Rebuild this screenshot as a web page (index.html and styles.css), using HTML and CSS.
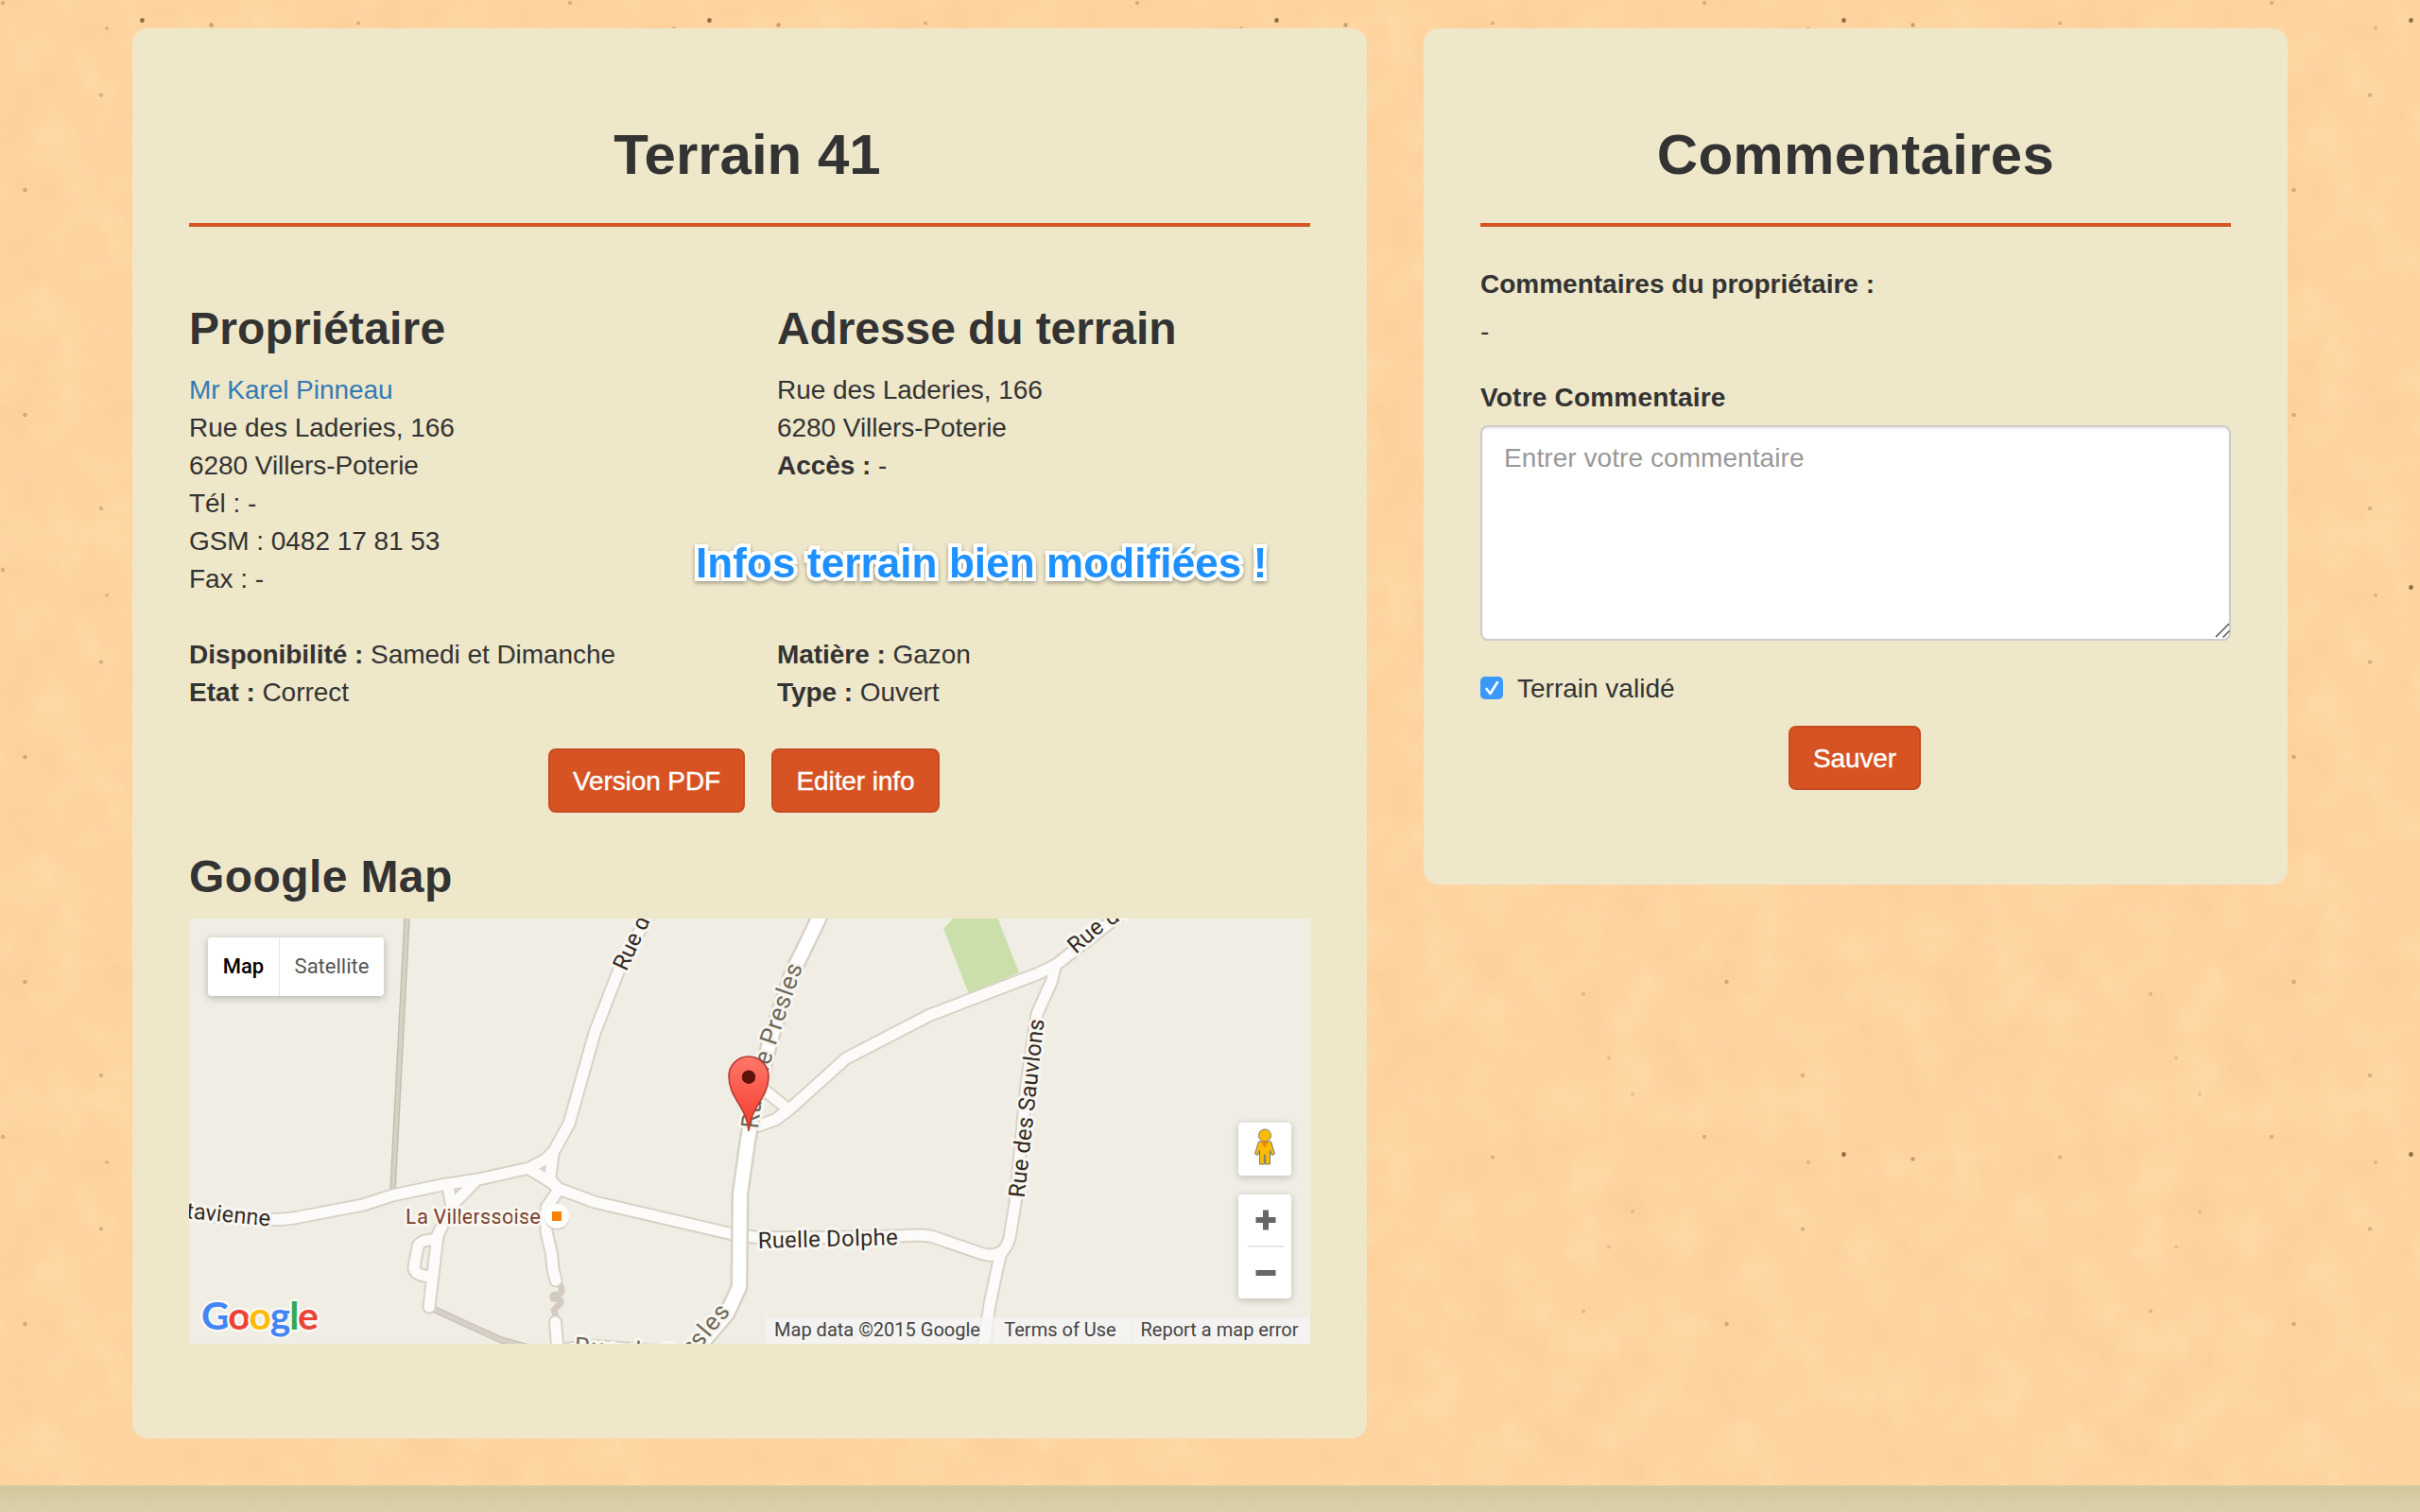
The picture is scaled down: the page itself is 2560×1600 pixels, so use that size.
FILE: index.html
```html
<!DOCTYPE html>
<html lang="fr">
<head>
<meta charset="utf-8">
<title>Terrain 41</title>
<link rel="stylesheet" href="styles.css">
</head>
<body>
<main class="page">
  <section class="card card-terrain">
    <h1 class="title t-terrain">Terrain 41</h1>
    <hr class="rule">
    <div class="columns">
      <div class="col">
        <h2 class="subtitle t-prop">Propriétaire</h2>
        <p><a class="link" href="#">Mr Karel Pinneau</a></p>
        <p>Rue des Laderies, 166</p>
        <p>6280 Villers-Poterie</p>
        <p>Tél : -</p>
        <p>GSM : 0482 17 81 53</p>
        <p>Fax : -</p>
      </div>
      <div class="col">
        <h2 class="subtitle t-adr">Adresse du terrain</h2>
        <p>Rue des Laderies, 166</p>
        <p>6280 Villers-Poterie</p>
        <p><b>Accès :</b> -</p>
      </div>
    </div>
    <div class="columns details">
      <div class="col">
        <p><b>Disponibilité :</b> Samedi et Dimanche</p>
        <p><b>Etat :</b> Correct</p>
      </div>
      <div class="col">
        <p><b>Matière :</b> Gazon</p>
        <p><b>Type :</b> Ouvert</p>
      </div>
    </div>
    <div class="actions">
      <button class="btn btn-pdf">Version PDF</button>
      <button class="btn btn-edit">Editer info</button>
    </div>
    <h2 class="subtitle t-map">Google Map</h2>
    <div class="map">
      <svg class="map-canvas" viewBox="200 972 1186 450" width="1186" height="450">
        <defs>
          <linearGradient id="pin" x1="0" y1="0" x2="0" y2="1">
            <stop offset="0" stop-color="#ff776b"/>
            <stop offset="1" stop-color="#f23a2b"/>
          </linearGradient>
          <g id="minor">
            <path d="M195 1283Q240 1290 285 1290.500Q302 1291 316 1288L384 1275L415 1265L467 1254L506 1248L560 1236L577 1227L586 1218L602 1189L629 1093L656 1023L686 968"/>
            <path d="M560 1237L583 1251L591 1258L629 1272L775 1306L801 1309.500Q920 1310 972 1307L984.500 1308L1040 1327Q1051 1330 1058 1325"/>
            <path d="M585 1222L581.500 1247L591 1259L578 1278V1303L583.500 1327L585 1343L588 1355"/>
            <path d="M587.500 1399L590 1430"/>
            <path d="M474 1256L478.500 1280M504 1249L478.500 1275L463 1307L459 1340L454 1383"/>
            <path d="M462 1312Q445 1311 442 1319L438 1341Q438 1350 457 1351"/>
            <path d="M797 1193L820 1185L835 1174L895 1120L984 1074L1099 1030L1117 1021L1176 975L1196 960"/>
            <path d="M803 1149L834 1174"/>
            <path d="M1116 1022L1113 1037L1097 1073L1086 1147L1074 1273L1068 1310Q1066 1318 1058 1328L1047 1380L1040 1428"/>
            <path d="M596 1428L625 1424L700 1430"/>
          </g>
          <path id="major" d="M869 966L838 1030L815 1100L798 1167L791 1207L783 1263L782 1362L769 1390L735 1430"/>
          <path id="l-presles" d="M802 1195Q806 1150 821 1105T848 1026L858 1002"/>
          <path id="l-south" d="M607 1433L700 1440Q724 1443 740 1428L790 1368"/>
          <path id="l-ne" d="M1138 1010L1161 990Q1174 978 1230 951"/>
        </defs>
        <rect x="200" y="972" width="1186" height="450" fill="#f0ede4"/>
        <path d="M1008 972H1055.500L1078 1029L1025 1052L998 982.700Z" fill="#cbdfab"/>
        <path d="M430.500 972L415.500 1260" stroke="#bfbbad" stroke-width="6.500"/>
        <path d="M430.500 972L415.500 1260" stroke="#d5d2c4" stroke-width="4"/>
        <path d="M456 1384L530 1418L560 1426" stroke="#c4bcb2" stroke-width="7" fill="none"/>
        <path d="M456 1384L530 1418L560 1426" stroke="#d8d0c8" stroke-width="5" fill="none"/>
        <path id="steps" d="M592 1358Q597 1368 591 1370Q583 1369 585 1374Q596 1375 593 1379L586 1386L589 1396" stroke="#d3cac1" stroke-width="6.500" fill="none" stroke-linecap="round"/>
        <use href="#minor" class="road" stroke="#d8d2c6" stroke-width="15"/>
        <use href="#minor" class="road" stroke="#fcfbf9" stroke-width="11"/>
        <use href="#major" class="road" stroke="#d8d2c6" stroke-width="19"/>
        <use href="#major" class="road" stroke="#fff" stroke-width="14"/>
        <g class="lbl">
          <text font-size="24" text-anchor="end" transform="translate(285.500 1297.500) rotate(5.500)" textLength="89.500">tavienne</text>
          <text font-size="24" transform="translate(662.500 1028.500) rotate(-65)">Rue de</text>
          <text font-size="24" x="0" y="0" transform="translate(802 1321) rotate(-1.500)" textLength="148">Ruelle Dolphe</text>
          <text font-size="24" transform="translate(1083.500 1268) rotate(-83.600)" textLength="190">Rue des Sauvlons</text>
          <text font-size="24"><textPath href="#l-ne">Rue de</textPath></text>
          <text font-size="26" class="grey"><textPath href="#l-presles" textLength="179">Rue de Presles</textPath></text>
          <text font-size="26" class="grey"><textPath href="#l-south" textLength="188">Rue de Presles</textPath></text>
          <text font-size="22" class="poi" x="429" y="1294.500" textLength="143">La Villerssoise</text>
        </g>
        <circle cx="589" cy="1288.500" r="13" fill="#cfcbc2"/>
        <circle cx="589" cy="1287" r="13" fill="#fff"/>
        <rect x="584" y="1282" width="10" height="10" fill="#f98200"/>
        <path d="M792 1197C790 1171 771 1162 771 1139A21 21 0 0 1 813 1139C813 1162 794 1171 792 1197Z" fill="url(#pin)" stroke="#b5372c" stroke-width="1.500"/>
        <circle cx="792" cy="1139.700" r="7.200" fill="#5d120c"/>
        <text class="logo" x="213" y="1407" textLength="124"><tspan fill="#4285f4">G</tspan><tspan fill="#ea4335">o</tspan><tspan fill="#fbbc05">o</tspan><tspan fill="#4285f4">g</tspan><tspan fill="#34a853">l</tspan><tspan fill="#ea4335">e</tspan></text>
      </svg>
      <div class="map-types"><span class="type on">Map</span><span class="type">Satellite</span></div>
      <div class="map-controls">
        <div class="ctrl pegman">
          <svg width="24" height="40" viewBox="0 0 24 40">
            <path d="M5.500 14H18.500L22.500 27L19.500 28.500L17.500 23V38H12.600V28H11.400V38H6.500V23L4.500 28.500L1.500 27Z" fill="#fbbc05" stroke="#777" stroke-width="1"/>
            <path d="M8 14H16L12 21Z" fill="#ef8c00"/>
            <circle cx="12" cy="7.500" r="6.500" fill="#fbbc05" stroke="#777" stroke-width="1"/>
          </svg>
        </div>
        <div class="ctrl zoom">
          <svg width="22" height="22" viewBox="0 0 22 22"><path d="M.500 11H21.500M11 .500V21.500" stroke="#666" stroke-width="6"/></svg>
          <i class="sep"></i>
          <svg width="22" height="22" viewBox="0 0 22 22"><path d="M.500 11H21.500" stroke="#666" stroke-width="6"/></svg>
        </div>
      </div>
      <div class="legal"><span class="l1">Map data ©2015 Google</span><span class="l2">Terms of Use</span><span class="l3">Report a map error</span></div>
    </div>
    <div class="notice">Infos terrain bien modifiées !</div>
  </section>

  <section class="card card-comments">
    <h1 class="title t-com">Commentaires</h1>
    <hr class="rule">
    <p class="owner-label"><b>Commentaires du propriétaire :</b></p>
    <p class="owner-text">-</p>
    <label class="field-label">Votre Commentaire</label>
    <div class="field">
      <textarea class="input" placeholder="Entrer votre commentaire"></textarea>
      <svg class="grip" width="16" height="16" viewBox="0 0 16 16"><path d="M1 15L15 1M8.500 15.500L15.500 8.500" stroke="#555" stroke-width="1.500"/></svg>
    </div>
    <div class="check">
      <svg width="24" height="24" viewBox="0 0 24 24"><rect width="24" height="24" rx="5" fill="#3b99fc"/><path d="M6.500 13L10.500 18L18 6" fill="none" stroke="#fff" stroke-width="2.600" stroke-linecap="round" stroke-linejoin="round"/></svg>
      <span>Terrain validé</span>
    </div>
    <div class="save"><button class="btn btn-save">Sauver</button></div>
  </section>
</main>
<footer class="footer"></footer>
</body>
</html>
```
FILE: styles.css
```css
* { box-sizing: border-box; }
html, body { margin: 0; height: 1600px; overflow: hidden; }
body {
  width: 2560px;
  display: flex;
  flex-direction: column;
  font: 28px/40px "Liberation Sans", Arial, sans-serif;
  color: #333;
  background-color: #ffd8a5;
  background-image: url("data:image/svg+xml,%3Csvg xmlns='http://www.w3.org/2000/svg' width='600' height='600'%3E%3Cfilter id='n' x='0' y='0' width='100%25' height='100%25' color-interpolation-filters='sRGB'%3E%3CfeTurbulence type='fractalNoise' baseFrequency='.02 .016' numOctaves='5' seed='7' stitchTiles='stitch'/%3E%3CfeColorMatrix values='0 0 0 0 .975 0 0 0 0 .79 0 0 0 0 .57 .9 0 0 0 -.2'/%3E%3C/filter%3E%3Crect width='600' height='600' filter='url(%23n)'/%3E%3Cg fill='%23805a30'%3E%3Cellipse cx='150.500' cy='21.500' rx='2.300' ry='2.600' opacity='.85'/%3E%3Ccircle cx='223.500' cy='26.500' r='2.200' opacity='.45'/%3E%3Ccircle cx='379' cy='24.500' r='2' opacity='.3'/%3E%3Ccircle cx='3' cy='3' r='2.200' opacity='.3'/%3E%3Ccircle cx='113' cy='30' r='2' opacity='.25'/%3E%3Ccircle cx='107' cy='100.500' r='2.200' opacity='.3'/%3E%3Ccircle cx='26.500' cy='201' r='2.300' opacity='.35'/%3E%3Ccircle cx='26.500' cy='439' r='2.300' opacity='.35'/%3E%3Ccircle cx='107' cy='538' r='2.200' opacity='.3'/%3E%3Ccircle cx='475' cy='452' r='2' opacity='.25'/%3E%3Ccircle cx='475' cy='187.500' r='2' opacity='.25'/%3E%3Ccircle cx='527' cy='558' r='2' opacity='.2'/%3E%3Ccircle cx='527' cy='82' r='2' opacity='.2'/%3E%3Ccircle cx='502' cy='119.500' r='2' opacity='.2'/%3E%3Ccircle cx='502' cy='519.500' r='2' opacity='.2'/%3E%3C/g%3E%3C/svg%3E");
}
p { margin: 0; position: relative; top: 1px; letter-spacing: -.05px; }
.page { display: flex; align-items: flex-start; gap: 60px; height: 1572px; padding: 30px 140px 0; }
.card { background: #eee7c9; border-radius: 16px; padding: 100px 60px; position: relative; }
.card-terrain { width: 1306px; height: 1492px; }
.card-comments { width: 914px; height: 906px; }
.title { margin: 0; padding-top: 1px; height: 66px; font-size: 60px; line-height: 66px; text-align: center; }
.t-terrain { padding-right: 5px; }
.t-com { letter-spacing: .3px; }
.rule { margin: 40px 0 0; border: 0; height: 4px; background: #d75323; }
.columns { display: flex; margin-top: 80px; height: 352px; }
.col { flex: none; width: 622px; white-space: nowrap; }
.subtitle { margin: 0 0 18px; padding-top: 1px; font-size: 48px; line-height: 53px; white-space: nowrap; letter-spacing: .15px; }
.t-adr { letter-spacing: -.1px; }
.t-map { letter-spacing: .4px; }
.link { color: #337ab7; text-decoration: none; }
.columns.details { margin-top: 0; height: 80px; }
.actions { display: flex; gap: 28px; margin: 40px 0 40px 380px; }
.btn { height: 68px; padding: 1px 0 0; border: 2px solid #c64a1f; border-radius: 8px; background: #d75323; color: #fff; font: 28px/40px "Liberation Sans", Arial, sans-serif; letter-spacing: -.1px; white-space: nowrap; -webkit-text-stroke: .4px #fff; }
.btn-pdf { width: 208px; }
.btn-edit { width: 178px; }
.btn-save { width: 140px; }
.map { position: relative; width: 1186px; height: 450px; overflow: hidden; }
.map-canvas { display: block; }
.road { fill: none; stroke-linecap: round; stroke-linejoin: round; }
.lbl text { font-family: Roboto, sans-serif; fill: #33291f; stroke: #f8f6f1; stroke-width: 6px; stroke-linejoin: round; paint-order: stroke; }
.lbl .grey { fill: #6f6857; }
.lbl .poi { fill: #7b3f2c; }
.logo { font: 700 41px Lato, sans-serif; stroke: #f8f7f3; stroke-width: 5px; paint-order: stroke; stroke-linejoin: round; }
.map-types { position: absolute; left: 20px; top: 20px; display: flex; height: 62px; border-radius: 4px; background: #fff; box-shadow: 0 2px 8px rgba(0,0,0,.25); font: 22px/61px Roboto, sans-serif; color: #565656; }
.type { width: 110px; text-align: center; }
.type.on { width: 76px; color: #000; font-weight: 500; border-right: 1px solid #e4e4e4; }
.map-controls { position: absolute; right: 20px; top: 216px; display: flex; flex-direction: column; gap: 20px; }
.ctrl { width: 56px; background: #fff; border-radius: 4px; box-shadow: 0 2px 8px rgba(0,0,0,.2); display: flex; flex-direction: column; align-items: center; }
.pegman { height: 56px; padding-top: 6px; }
.zoom { height: 110px; justify-content: space-between; padding: 16px 0; padding-left: 2px; }
.sep { width: 38px; height: 2px; background: #e6e6e6; }
.legal { position: absolute; right: 0; bottom: 0; height: 28px; display: flex; background: rgba(245,245,245,.72); font: 20px/27px Roboto, sans-serif; color: #444; white-space: nowrap; }
.legal span { text-align: center; }
.l1 { width: 240px; padding-right: 4px; }
.l2 { width: 146px; border-left: 2px solid #f0eee7; padding-right: 5px; }
.l3 { width: 190px; border-left: 2px solid #f0eee7; padding-right: 4px; }
.notice { position: absolute; left: 596px; top: 541px; font-size: 44px; line-height: 50px; font-weight: 700; letter-spacing: .1px; color: #1e90ff; white-space: nowrap; -webkit-text-stroke: 8px #fff; paint-order: stroke fill; filter: drop-shadow(0 2px 2px rgba(0,0,0,.35)); }
.owner-label { margin-top: 40px; letter-spacing: 0; }
.owner-text { margin-top: 10px; }
.field-label { display: block; height: 40px; padding-top: 1px; margin: 30px 0 10px; font-weight: 700; letter-spacing: .2px; }
.field { position: relative; height: 228px; }
.input { display: block; width: 794px; height: 228px; resize: none; border: 2px solid #ccc; border-radius: 8px; padding: 13px 23px; background: #fff; font: 28px/40px "Liberation Sans", Arial, sans-serif; letter-spacing: .07px; box-shadow: inset 0 2px 2px rgba(0,0,0,.075); }
.input::placeholder { color: #999; opacity: 1; }
.grip { position: absolute; right: 1px; bottom: 3px; }
.check { display: flex; align-items: center; gap: 15px; height: 40px; margin-top: 30px; }
.check span { padding-top: 2px; }
.save { display: flex; justify-content: center; margin-top: 20px; padding-right: 2px; }
.footer { flex: none; height: 28px; background: linear-gradient(#d2c89e, #dad1aa); }
```
